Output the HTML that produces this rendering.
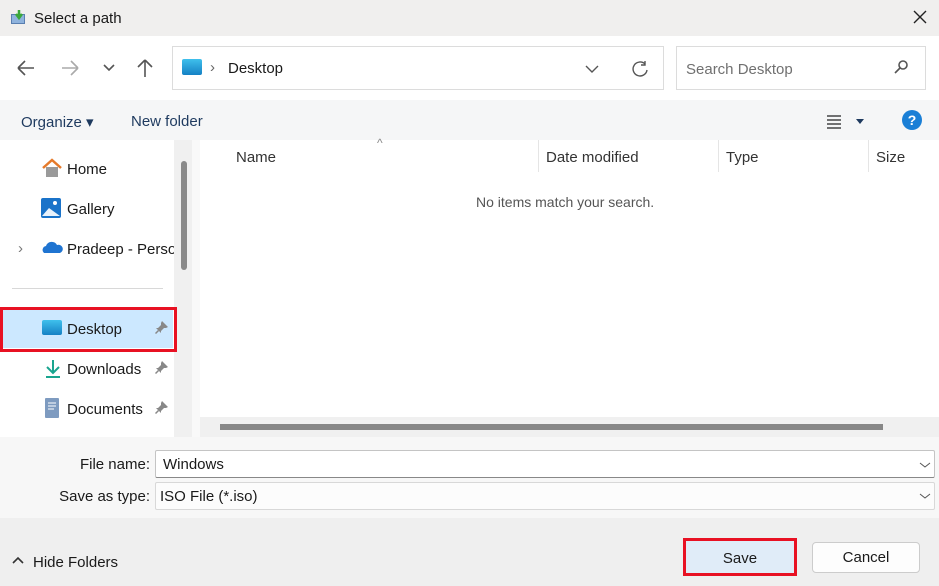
<!DOCTYPE html>
<html><head><style>
*{box-sizing:border-box;margin:0;padding:0}
body{width:939px;height:586px;overflow:hidden;font-family:"Liberation Sans",sans-serif;font-size:15px;color:#1a1a1a;background:#fff;position:relative}
.a{position:absolute}
</style></head><body>
<div class="a" style="left:0;top:0;width:939px;height:36px;background:#f0efee"></div>
<svg class="a" style="left:10px;top:9px" width="16" height="16"><rect x="1" y="5" width="14" height="10" fill="#5a7fb0"/><rect x="2" y="6" width="12" height="8" fill="#8fb3dd"/><path d="M9 1 L9 8 M6 5 L9 9 L12 5" stroke="#3aa83a" stroke-width="2.5" fill="none"/></svg>
<div class="a" style="left:34px;top:10px;font-size:15px">Select a path</div>
<svg class="a" style="left:912px;top:9px" width="16" height="16" stroke="#222" stroke-width="1.4"><path d="M2 2 L14 14 M14 2 L2 14"/></svg>

<svg class="a" style="left:14px;top:56px" width="150" height="24" fill="none" stroke-width="1.6">
<path d="M4 12 H20 M4 12 L11 5 M4 12 L11 19" stroke="#555"/>
<path d="M48 12 H64 M64 12 L57 5 M64 12 L57 19" stroke="#aaa"/>
<path d="M90 9 L95 14 L100 9" stroke="#555"/>
<path d="M131 4 V21 M131 4 L124 11 M131 4 L138 11" stroke="#555"/>
</svg>
<div class="a" style="left:172px;top:46px;width:492px;height:44px;border:1px solid #dcdcdc"></div>
<div class="a" style="left:182px;top:59px;width:20px;height:16px;background:linear-gradient(#3fc0ec,#1581c4);border-radius:2px"></div>
<div class="a" style="left:210px;top:59px;color:#666">›</div>
<div class="a" style="left:228px;top:60px">Desktop</div>
<svg class="a" style="left:582px;top:58px" width="70" height="22" fill="none" stroke="#555" stroke-width="1.4"><path d="M4 8 L10 14 L16 8"/><path d="M63 6 A7 7 0 1 0 65 12 M63 3 V7 H59"/></svg>
<div class="a" style="left:676px;top:46px;width:250px;height:44px;border:1px solid #dcdcdc"></div>
<div class="a" style="left:686px;top:61px;color:#707070">Search Desktop</div>
<svg class="a" style="left:893px;top:59px" width="16" height="16" fill="none" stroke="#555" stroke-width="1.6"><circle cx="10" cy="6" r="4"/><path d="M7 9 L2 14"/></svg>

<div class="a" style="left:0;top:100px;width:939px;height:40px;background:#f5f6f7"></div>
<div class="a" style="left:21px;top:113px;color:#1e3a5f">Organize ▾</div>
<div class="a" style="left:131px;top:113px;color:#1e3a5f">New folder</div>
<svg class="a" style="left:825px;top:113px" width="45" height="16"><path d="M2 3H16M2 7H16M2 11H16M2 15H16" stroke="#222" stroke-width="1.2"/><path d="M31 6 L39 6 L35 11Z" fill="#1e3a5f"/></svg>
<div class="a" style="left:902px;top:110px;width:20px;height:20px;border-radius:50%;background:#1a7fd6;color:#fff;font-weight:bold;font-size:14px;text-align:center;line-height:20px">?</div>

<div class="a" style="left:174px;top:140px;width:18px;height:297px;background:#f0f0f0"></div>
<div class="a" style="left:181px;top:161px;width:6px;height:109px;background:#8a8a8a;border-radius:3px"></div>
<div class="a" style="left:192px;top:140px;width:8px;height:297px;background:#f9f9f9"></div>
<svg class="a" style="left:41px;top:158px" width="22" height="20"><path d="M2 10 L11 2 L20 10" stroke="#e67a2a" stroke-width="2.5" fill="none"/><rect x="5" y="9" width="12" height="10" fill="#9a9a9a"/></svg>
<div class="a" style="left:67px;top:161px">Home</div>
<svg class="a" style="left:41px;top:198px" width="20" height="20"><rect width="20" height="20" rx="2" fill="#1a73c9"/><path d="M1 18 L8 10 L19 18Z" fill="#e8f2fb"/><circle cx="14" cy="5" r="2" fill="#fff"/></svg>
<div class="a" style="left:67px;top:201px">Gallery</div>
<div class="a" style="left:18px;top:240px;color:#777">›</div>
<svg class="a" style="left:41px;top:240px" width="22" height="14"><path d="M3 13 A4 4 0 0 1 5 6 A6 6 0 0 1 16 5 A4 4 0 0 1 19 13Z" fill="#1f74d1"/></svg>
<div class="a" style="left:67px;top:241px;width:107px;overflow:hidden;white-space:nowrap">Pradeep - Personal</div>
<div class="a" style="left:12px;top:288px;width:151px;height:1px;background:#d8d8d8"></div>
<div class="a" style="left:3px;top:310px;width:170px;height:38px;background:#cce8ff"></div>
<div class="a" style="left:0;top:307px;width:177px;height:45px;border:3px solid #e81123"></div>
<div class="a" style="left:42px;top:320px;width:20px;height:15px;background:linear-gradient(#3fc0ec,#1581c4);border-radius:2px"></div>
<div class="a" style="left:67px;top:321px">Desktop</div>
<svg class="a" style="left:45px;top:359px" width="16" height="20" fill="none" stroke="#1aa58f" stroke-width="2"><path d="M8 1 V13 M2 8 L8 14 L14 8 M1 18 H15"/></svg>
<div class="a" style="left:67px;top:361px">Downloads</div>
<svg class="a" style="left:45px;top:398px" width="14" height="20"><rect width="14" height="20" rx="1" fill="#7e9bc0"/><path d="M3 5H11M3 8H11M3 11H9" stroke="#fff"/></svg>
<div class="a" style="left:67px;top:401px">Documents</div>
<svg class="a" style="left:155px;top:320px" width="14" height="96" fill="#888"><g><path d="M7 1 L13 7 L11 8 L9 8 L6 11 L6 13 L1 8 L3 8 L6 5 L6 3Z"/><path d="M3.5 10.5 L0.5 13.5" stroke="#888" stroke-width="1.5"/></g><g transform="translate(0,40)"><path d="M7 1 L13 7 L11 8 L9 8 L6 11 L6 13 L1 8 L3 8 L6 5 L6 3Z"/><path d="M3.5 10.5 L0.5 13.5" stroke="#888" stroke-width="1.5"/></g><g transform="translate(0,80)"><path d="M7 1 L13 7 L11 8 L9 8 L6 11 L6 13 L1 8 L3 8 L6 5 L6 3Z"/><path d="M3.5 10.5 L0.5 13.5" stroke="#888" stroke-width="1.5"/></g></svg>

<div class="a" style="left:236px;top:149px;color:#333">Name</div>
<div class="a" style="left:377px;top:136px;color:#888;font-size:12px">^</div>
<div class="a" style="left:538px;top:140px;width:1px;height:32px;background:#e5e5e5"></div>
<div class="a" style="left:546px;top:149px;color:#333">Date modified</div>
<div class="a" style="left:718px;top:140px;width:1px;height:32px;background:#e5e5e5"></div>
<div class="a" style="left:726px;top:149px;color:#333">Type</div>
<div class="a" style="left:868px;top:140px;width:1px;height:32px;background:#e5e5e5"></div>
<div class="a" style="left:876px;top:149px;color:#333">Size</div>
<div class="a" style="left:476px;top:194px;color:#555;font-size:14px">No items match your search.</div>
<div class="a" style="left:200px;top:417px;width:739px;height:20px;background:#f0f0f0"></div>
<div class="a" style="left:220px;top:424px;width:663px;height:6px;background:#878787"></div>

<div class="a" style="left:0;top:437px;width:939px;height:81px;background:#f7f7f7"></div>
<div class="a" style="left:0;top:456px;width:150px;text-align:right">File name:</div>
<div class="a" style="left:155px;top:450px;width:780px;height:28px;background:#fff;border:1px solid #c4c4c4;border-bottom-color:#888;border-radius:2px"></div>
<div class="a" style="left:163px;top:456px">Windows</div>
<div class="a" style="left:0;top:488px;width:150px;text-align:right">Save as type:</div>
<div class="a" style="left:155px;top:482px;width:780px;height:28px;background:#fcfcfc;border:1px solid #d8d8d8;border-radius:2px"></div>
<div class="a" style="left:160px;top:488px">ISO File (*.iso)</div>
<svg class="a" style="left:918px;top:460px" width="14" height="40" fill="none" stroke="#555"><path d="M2 3 L7 7 L12 3 M2 34 L7 38 L12 34"/></svg>

<div class="a" style="left:0;top:518px;width:939px;height:68px;background:#efefef"></div>
<svg class="a" style="left:12px;top:556px" width="12" height="10" fill="none" stroke="#333" stroke-width="1.6"><path d="M1 7 L6 2 L11 7"/></svg>
<div class="a" style="left:33px;top:554px">Hide Folders</div>
<div class="a" style="left:683px;top:538px;width:114px;height:38px;border:3px solid #e81123;background:#e0ecf8"></div>
<div class="a" style="left:683px;top:550px;width:114px;text-align:center">Save</div>
<div class="a" style="left:812px;top:542px;width:108px;height:31px;border:1px solid #ccc;border-radius:4px;background:#fdfdfd;text-align:center;line-height:30px">Cancel</div>
</body></html>
